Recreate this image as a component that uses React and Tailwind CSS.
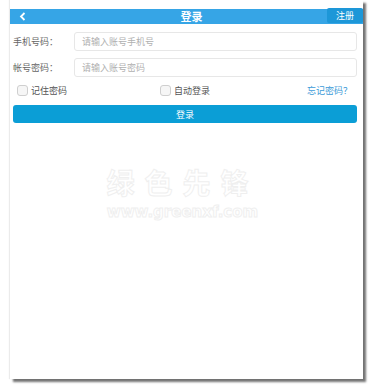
export default function App() {
  const font = { fontFamily: '"Noto Sans CJK SC", "Noto Sans", sans-serif' };
  return (
    <div className="w-[375px] h-[390px] bg-white overflow-hidden" style={font}>
      <div className="ml-[10px] w-[353px] h-[379px] bg-white flex flex-col shadow-[3px_3px_2px_rgba(0,0,0,0.55),-1px_0_1px_rgba(0,0,0,0.08)]">
        {/* header */}
        <div className="mt-[9px] h-[15px] bg-[#36a5e6] flex items-center">
          <div className="w-[316px] flex items-center">
            <svg width="8" height="9" viewBox="0 0 8 9" className="ml-[9px]">
              <polyline points="5.5,1 2,4.5 5.5,8" fill="none" stroke="#fff" strokeWidth="1.8" />
            </svg>
            <div className="flex-1 text-center text-white text-[11px] font-bold leading-none pl-[30px]">登录</div>
          </div>
          <div className="ml-auto self-start -mt-[1px] w-[36px] h-[15px] bg-[#1d97d8] rounded-[2px] flex items-center justify-center text-white text-[9px] leading-none">注册</div>
        </div>
        {/* rows */}
        <div className="mt-[8px] flex items-center h-[19px]">
          <div className="w-[64px] pl-[3px] text-[9px] text-[#666] leading-none">手机号码：</div>
          <div className="flex-1 mr-[6px] h-full border border-[#e7e7e7] rounded-[3px] flex items-center pl-[7px] text-[9px] text-[#b0b0b0] leading-none">请输入账号手机号</div>
        </div>
        <div className="mt-[7px] flex items-center h-[19px]">
          <div className="w-[64px] pl-[3px] text-[9px] text-[#666] leading-none">帐号密码：</div>
          <div className="flex-1 mr-[6px] h-full border border-[#e7e7e7] rounded-[3px] flex items-center pl-[7px] text-[9px] text-[#b0b0b0] leading-none">请输入账号密码</div>
        </div>
        <div className="mt-[8px] h-[11px] flex items-center">
          <div className="ml-[7px] w-[11px] h-[11px] rounded-[3px] border border-[#cfcfcf] bg-[#f6f6f6]"></div>
          <div className="ml-[3px] text-[9px] text-[#555] leading-none">记住密码</div>
          <div className="ml-[93px] w-[11px] h-[11px] rounded-[3px] border border-[#cfcfcf] bg-[#f6f6f6]"></div>
          <div className="ml-[3px] text-[9px] text-[#555] leading-none">自动登录</div>
          <div className="ml-auto mr-[11px] text-[9px] text-[#3c9bd8] leading-none">忘记密码？</div>
        </div>
        <div className="mt-[9px] mx-[3px] mr-[6px] h-[18px] bg-[#0b9ed6] rounded-[3px] flex items-center justify-center text-white text-[9px] leading-none">登录</div>
        {/* watermark */}
        <div className="mt-[45px] flex flex-col items-center gap-[9px] pr-[8px] select-none">
          <div className="text-[28px] font-bold leading-none tracking-[10px] text-white [-webkit-text-stroke:1px_#efefef]">绿色先锋</div>
          <div className="text-[15px] font-bold leading-none text-white [-webkit-text-stroke:1px_#efefef]" style={{ fontFamily: '"DejaVu Sans", sans-serif' }}>www.greenxf.com</div>
        </div>
      </div>
    </div>
  );
}
